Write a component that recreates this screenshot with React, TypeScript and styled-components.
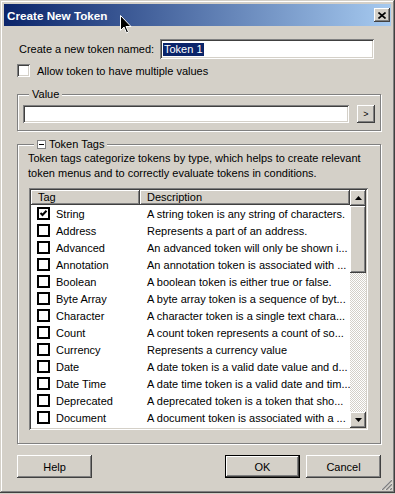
import React from 'react';
import styled, { createGlobalStyle, css } from 'styled-components';

const face = '#d4d0c8';
const shadow = '#808080';
const dark = '#404040';

const GlobalStyle = createGlobalStyle`
  html, body {
    margin: 0;
    background: ${face};
  }
  body {
    font-family: "Liberation Sans", Arial, sans-serif;
    font-size: 11px;
    color: #000;
  }
  * { box-sizing: border-box; }
`;

const raised = css`
  background: ${face};
  box-shadow: inset -1px -1px 0 ${dark}, inset 1px 1px 0 #fff, inset -2px -2px 0 ${shadow};
`;

const sunken = css`
  background: #fff;
  box-shadow: inset 1px 1px 0 ${shadow}, inset -1px -1px 0 #fff, inset 2px 2px 0 ${dark},
    inset -2px -2px 0 ${face};
`;

const Window = styled.div`
  position: relative;
  width: 395px;
  height: 493px;
  padding: 4px;
  display: flex;
  flex-direction: column;
  background: ${face};
  box-shadow: inset -1px -1px 0 ${dark}, inset 1px 1px 0 ${face}, inset -2px -2px 0 ${shadow},
    inset 2px 2px 0 #fff;
`;

const TitleBar = styled.div`
  height: 22px;
  display: flex;
  align-items: center;
  padding: 0 1px 0 3px;
  background: linear-gradient(to right, #0a246a, #a6caf0);
  color: #fff;
  font-weight: bold;
  font-size: 11.7px;
`;

const CloseButton = styled.div`
  ${raised};
  margin-left: auto;
  width: 16px;
  height: 14px;
  display: flex;
  align-items: center;
  justify-content: center;
`;

const Body = styled.div`
  flex: 1;
  display: flex;
  flex-direction: column;
  padding: 0 10px 0 13px;
`;

const NameRow = styled.div`
  margin-top: 13px;
  height: 20px;
  display: flex;
  align-items: center;
  padding-left: 2px;
`;

const TextBox = styled.div<{ $width?: number; $height: number }>`
  ${sunken};
  height: ${({ $height }) => $height}px;
  ${({ $width }) => ($width ? `width: ${$width}px; margin-left: auto; margin-right: 7px;` : 'flex: 1;')}
  display: flex;
  align-items: center;
  padding: 0 3px;
`;

const Selected = styled.span`
  background: #0a246a;
  color: #fff;
  line-height: 13px;
  padding: 0 1px;
`;

const CheckRow = styled.label`
  margin-top: 5px;
  height: 13px;
  display: flex;
  align-items: center;
  gap: 7px;
`;

const SunkenCheck = styled.span`
  ${sunken};
  width: 13px;
  height: 13px;
`;

const Group = styled.fieldset<{ $gap: number }>`
  margin: ${({ $gap }) => $gap}px 0 0;
  min-width: 0;
  border: 1px solid ${shadow};
  box-shadow: 1px 1px 0 #fff, inset 1px 1px 0 #fff;
`;

const ValueGroup = styled(Group)`
  padding: 4px 5px 7px;
`;

const TagsGroup = styled(Group)`
  padding: 0 12px 13px 10px;
`;

const Legend = styled.legend`
  margin-left: 6px;
  padding: 0 3px;
  line-height: 14px;
  background: ${face};
  display: flex;
  align-items: center;
  gap: 3px;
`;

const ToggleBox = styled.span`
  width: 9px;
  height: 9px;
  border: 1px solid ${shadow};
  background: #fff;
  display: flex;
  align-items: center;
  justify-content: center;
  &::after {
    content: '';
    width: 5px;
    height: 1px;
    background: #000;
  }
`;

const ValueRow = styled.div`
  display: flex;
  align-items: center;
  gap: 8px;
`;

const SmallButton = styled.div`
  ${raised};
  width: 18px;
  height: 18px;
  display: flex;
  align-items: center;
  justify-content: center;
  font-size: 9px;
`;

const Description = styled.p`
  margin: 0;
  line-height: 15px;
`;

const ListView = styled.div`
  ${sunken};
  margin: 7px 0 0 1px;
  height: 242px;
  padding: 2px;
  display: flex;
`;

const Columns = styled.div`
  flex: 1;
  display: flex;
  flex-direction: column;
  overflow: hidden;
`;

const Header = styled.div`
  display: grid;
  grid-template-columns: 109px 1fr;
  height: 15px;
  flex-shrink: 0;
`;

const HeaderCell = styled.div`
  background: ${face};
  box-shadow: inset -1px -1px 0 ${dark}, inset 1px 1px 0 #fff, inset -2px -2px 0 ${shadow};
  padding-left: 7px;
  line-height: 14px;
`;

const Rows = styled.div`
  flex: 1;
  overflow: hidden;
  background: #fff;
`;

const Row = styled.div`
  display: grid;
  grid-template-columns: 109px 1fr;
  height: 17px;
  align-items: center;
`;

const TagCell = styled.div`
  display: flex;
  align-items: center;
  gap: 6px;
  padding-left: 6px;
`;

const FlatCheck = styled.span`
  width: 13px;
  height: 13px;
  border: 2px solid #000;
  background: #fff;
  display: flex;
  align-items: center;
  justify-content: center;
`;

const DescCell = styled.div`
  padding-left: 7px;
  white-space: nowrap;
  overflow: hidden;
`;

const ScrollBar = styled.div`
  width: 16px;
  display: flex;
  flex-direction: column;
`;

const ArrowButton = styled.div`
  ${raised};
  height: 16px;
  display: flex;
  align-items: center;
  justify-content: center;
`;

const Thumb = styled.div`
  ${raised};
  height: 67px;
`;

const Track = styled.div`
  flex: 1;
  background-color: #fff;
  background-image: conic-gradient(${face} 25%, #fff 0 50%, ${face} 0 75%, #fff 0);
  background-size: 2px 2px;
`;

const Footer = styled.div`
  margin-top: 11px;
  display: flex;
  gap: 6px;
`;

const Button = styled.div<{ $default?: boolean }>`
  width: 75px;
  height: 23px;
  display: flex;
  align-items: center;
  justify-content: center;
  background: ${face};
  box-shadow: ${({ $default }) =>
    $default
      ? `inset 0 0 0 1px #000, inset -2px -2px 0 ${dark}, inset 2px 2px 0 #fff, inset -3px -3px 0 ${shadow}`
      : `inset -1px -1px 0 ${dark}, inset 1px 1px 0 #fff, inset -2px -2px 0 ${shadow}`};
  &:first-child {
    margin-right: auto;
  }
`;

const Grip = styled.svg`
  position: absolute;
  right: 3px;
  bottom: 3px;
`;

const Cursor = styled.svg`
  position: absolute;
  left: 120px;
  top: 15px;
`;

const tags: [string, string][] = [
  ['String', 'A string token is any string of characters.'],
  ['Address', 'Represents a part of an address.'],
  ['Advanced', 'An advanced token will only be shown i...'],
  ['Annotation', 'An annotation token is associated with ...'],
  ['Boolean', 'A boolean token is either true or false.'],
  ['Byte Array', 'A byte array token is a sequence of byt...'],
  ['Character', 'A character token is a single text chara...'],
  ['Count', 'A count token represents a count of so...'],
  ['Currency', 'Represents a currency value'],
  ['Date', 'A date token is a valid date value and d...'],
  ['Date Time', 'A date time token is a valid date and tim...'],
  ['Deprecated', 'A deprecated token is a token that sho...'],
  ['Document', 'A document token is associated with a ...'],
  // next row only peeks in at the bottom edge, its text is below the fold
  ['', ''],
];

const Triangle = ({ up }: { up?: boolean }) => (
  <svg width="7" height="4" viewBox="0 0 7 4">
    <path d={up ? 'M3.5 0L7 4H0z' : 'M0 0h7L3.5 4z'} fill="#000" />
  </svg>
);

export default function App() {
  return (
    <>
      <GlobalStyle />
      <Window>
        <TitleBar>
          Create New Token
          <CloseButton>
            <svg width="8" height="7" viewBox="0 0 8 7">
              <path d="M0.5 0.5l7 6M7.5 0.5l-7 6" stroke="#000" strokeWidth="1.6" />
            </svg>
          </CloseButton>
        </TitleBar>
        <Body>
          <NameRow>
            Create a new token named:
            <TextBox $width={214} $height={20}>
              <Selected>Token 1</Selected>
            </TextBox>
          </NameRow>
          <CheckRow>
            <SunkenCheck />
            Allow token to have multiple values
          </CheckRow>
          <ValueGroup $gap={10}>
            <Legend>Value</Legend>
            <ValueRow>
              <TextBox $height={18} />
              <SmallButton>&gt;</SmallButton>
            </ValueRow>
          </ValueGroup>
          <TagsGroup $gap={6}>
            <Legend>
              <ToggleBox />
              Token Tags
            </Legend>
            <Description>
              Token tags categorize tokens by type, which helps to create relevant
              <br />
              token menus and to correctly evaluate tokens in conditions.
            </Description>
            <ListView>
              <Columns>
                <Header>
                  <HeaderCell>Tag</HeaderCell>
                  <HeaderCell>Description</HeaderCell>
                </Header>
                <Rows>
                  {tags.map(([tag, desc], i) => (
                    <Row key={i}>
                      <TagCell>
                        <FlatCheck>
                          {i === 0 && (
                            <svg width="9" height="9" viewBox="0 0 9 9">
                              <path d="M1.5 4l2 2 4-4.2" stroke="#000" strokeWidth="2" fill="none" />
                            </svg>
                          )}
                        </FlatCheck>
                        {tag}
                      </TagCell>
                      <DescCell>{desc}</DescCell>
                    </Row>
                  ))}
                </Rows>
              </Columns>
              <ScrollBar>
                <ArrowButton>
                  <Triangle up />
                </ArrowButton>
                <Thumb />
                <Track />
                <ArrowButton>
                  <Triangle />
                </ArrowButton>
              </ScrollBar>
            </ListView>
          </TagsGroup>
          <Footer>
            <Button>Help</Button>
            <Button $default>OK</Button>
            <Button>Cancel</Button>
          </Footer>
        </Body>
        <Grip width="12" height="12" viewBox="0 0 12 12">
          {[0, 4, 8].map((o) => (
            <g key={o}>
              <path d={`M${o + 1} 12L12 ${o + 1}`} stroke="#fff" strokeWidth="1" />
              <path d={`M${o + 2} 12L12 ${o + 2}`} stroke={shadow} strokeWidth="1.4" />
            </g>
          ))}
        </Grip>
        <Cursor width="12" height="19" viewBox="0 0 12 19">
          <path d="M0.5 0.5v15l3.5-3.5 2.5 6 2-1-2.5-5.5h5z" fill="#000" stroke="#fff" strokeWidth="1" />
        </Cursor>
      </Window>
    </>
  );
}
